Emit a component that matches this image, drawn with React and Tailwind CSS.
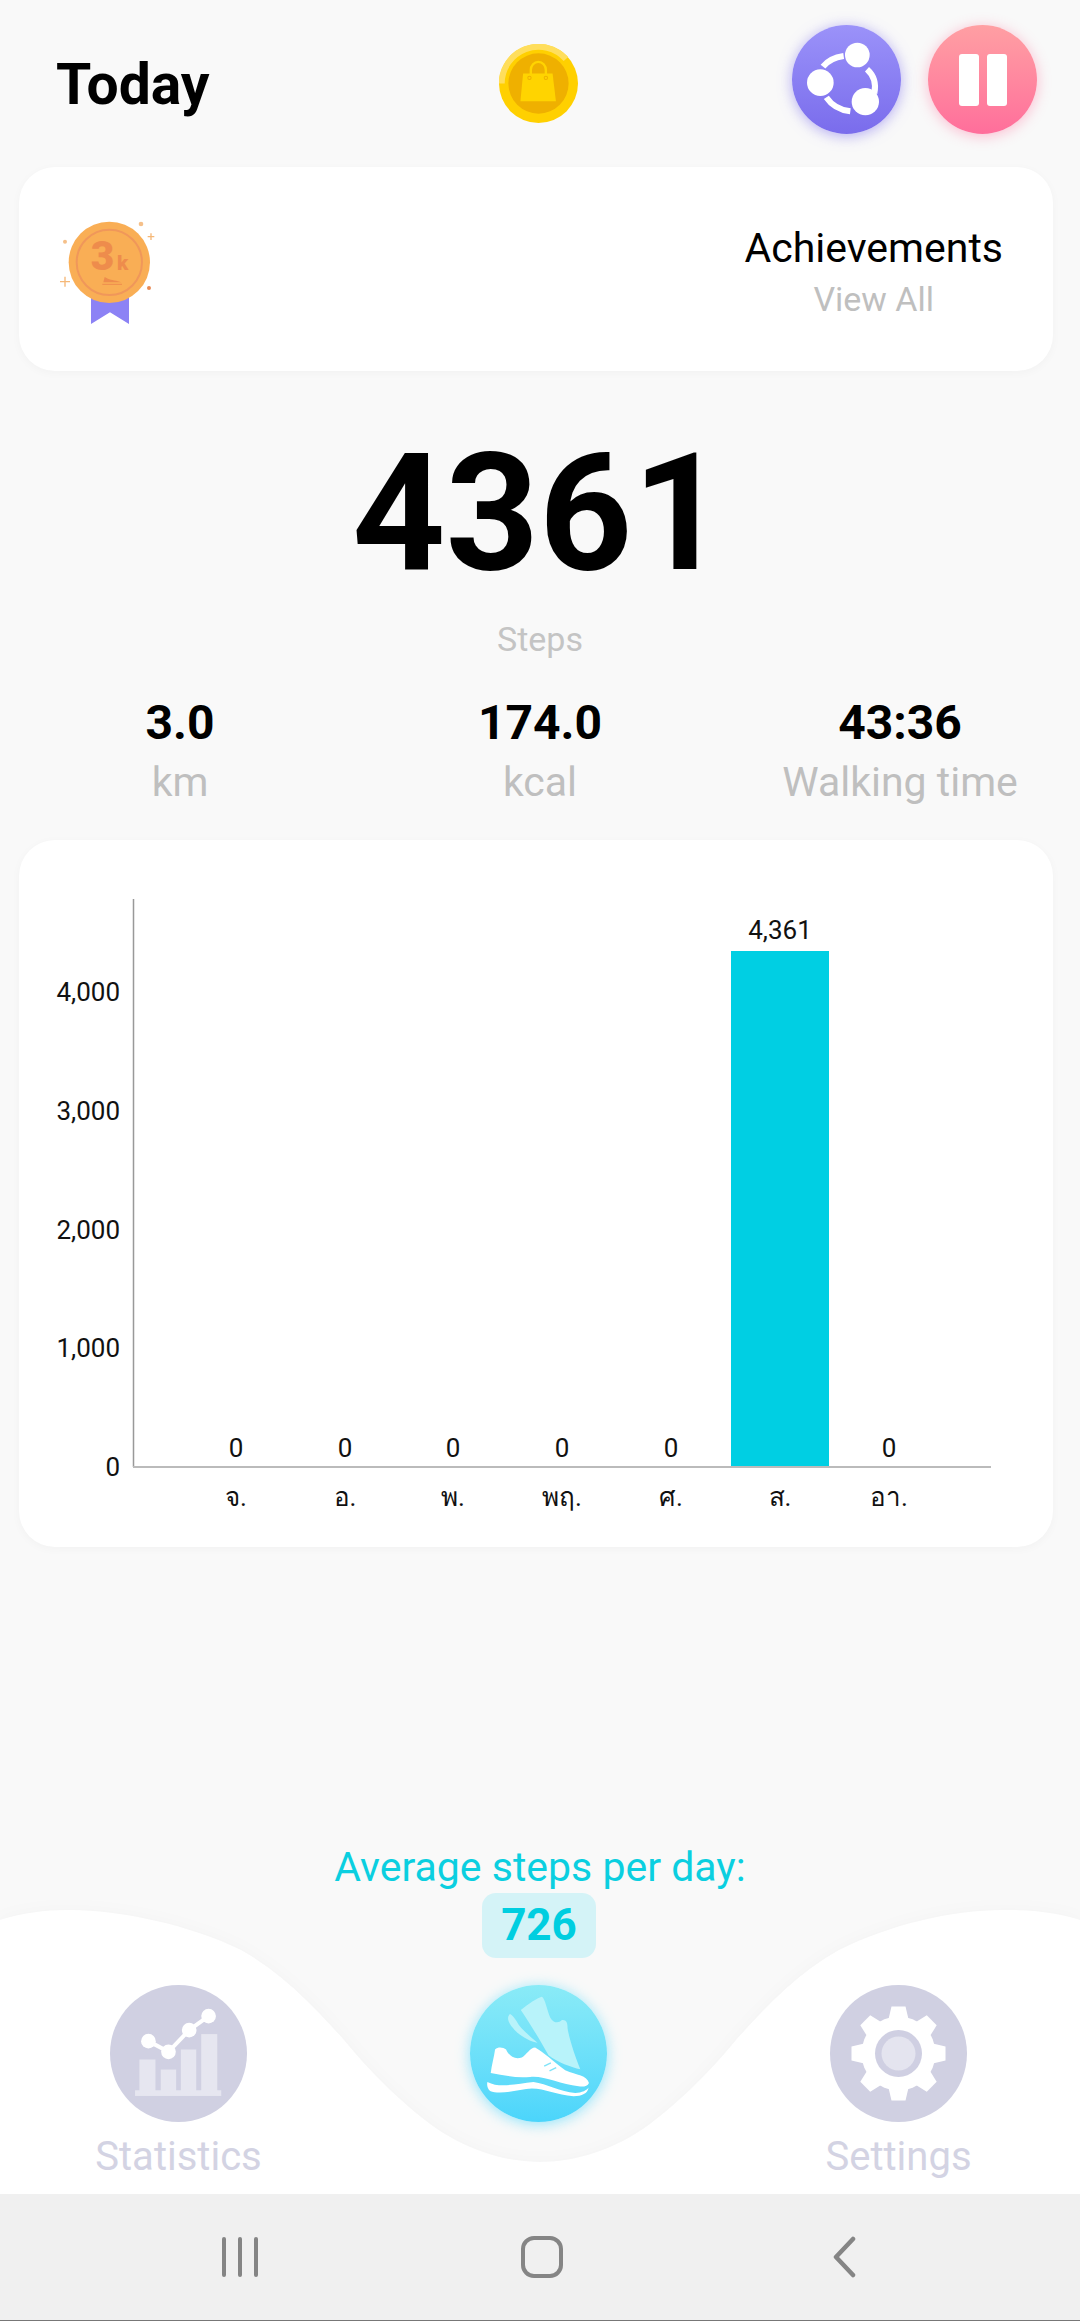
const font = { fontFamily: '"Roboto", "Noto Sans", sans-serif' };

const bars = [
  { day: 'จ.', value: '0', x: 236 },
  { day: 'อ.', value: '0', x: 345 },
  { day: 'พ.', value: '0', x: 453 },
  { day: 'พฤ.', value: '0', x: 562 },
  { day: 'ศ.', value: '0', x: 671 },
  { day: 'ส.', value: '4,361', x: 780 },
  { day: 'อา.', value: '0', x: 889 },
];

const ticks = [
  { label: '4,000', y: 991 },
  { label: '3,000', y: 1110 },
  { label: '2,000', y: 1229 },
  { label: '1,000', y: 1347 },
  { label: '0', y: 1466 },
];

const stats = [
  { value: '3.0', unit: 'km' },
  { value: '174.0', unit: 'kcal' },
  { value: '43:36', unit: 'Walking time' },
];

function Coin() {
  return (
    <svg viewBox="120 67 236 236" className="w-[79px] h-[79px]">
      <circle cx="238" cy="185" r="118" fill="#ffd000" />
      <path d="M128 185 A110 110 0 0 1 320 112" fill="none" stroke="#ffde5c" strokeWidth="18" />
      <circle cx="238" cy="185" r="90" fill="#efb000" />
      <path d="M192 155 H280 L290 238 H184 Z" fill="#ffd400" />
      <path d="M215 158 V145 A22 24 0 0 1 260 145 V158" fill="none" stroke="#ffd400" strokeWidth="7" />
      <circle cx="211" cy="168" r="5" fill="none" stroke="#efb000" strokeWidth="3" />
      <circle cx="260" cy="168" r="5" fill="none" stroke="#efb000" strokeWidth="3" />
    </svg>
  );
}

function ShareIcon() {
  return (
    <svg viewBox="65 45 327 327" className="w-[109px] h-[109px]">
      <g fill="none" stroke="#fff" strokeWidth="18">
        <path d="M158 170 C172 152 192 142 220 138" />
        <path d="M290 178 C310 196 318 222 312 250" />
        <path d="M168 262 C184 286 208 300 240 304" />
      </g>
      <g fill="#fff">
        <circle cx="261" cy="135" r="37" />
        <circle cx="150" cy="218" r="40" />
        <circle cx="285" cy="275" r="41" />
      </g>
    </svg>
  );
}

function Medal() {
  return (
    <svg viewBox="0 0 140 140" className="w-[140px] h-[140px]" style={font}>
      <g transform="scale(0.3333)">
        <path d="M153 295 H267 V375 L210 340 L153 375 Z" fill="#8c82f5" />
        <circle cx="208" cy="190" r="122" fill="#f9ae55" />
        <circle cx="208" cy="190" r="98" fill="none" stroke="#f0975a" strokeWidth="6" />
        <text x="152" y="212" fontSize="122" fontWeight="900" fill="#ee8c4c">3</text>
        <text x="231" y="212" fontSize="62" fontWeight="900" fill="#ee8c4c">k</text>
        <path d="M190 250 L194 234 L204 239 C214 244 232 244 244 250 Z" fill="#ee8c4c" />
        <path d="M187 256 H246" stroke="#ee8c4c" strokeWidth="3" />
        <circle cx="303" cy="75" r="7" fill="#f5c08a" />
        <circle cx="75" cy="128" r="6" fill="#f5c08a" />
        <circle cx="327" cy="267" r="6" fill="#e88a55" />
        <path d="M333 103 V123 M323 113 H343 M75 233 V263 M60 248 H90" stroke="#f5b878" strokeWidth="4" />
      </g>
    </svg>
  );
}

function Gear() {
  const teeth = [0, 45, 90, 135, 180, 225, 270, 315];
  return (
    <svg viewBox="-68.5 -68.5 137 137" className="w-[137px] h-[137px]">
      {teeth.map((a) => (
        <path key={a} d="M-7 -47 H7 L11 -30 H-11 Z" fill="#fff" transform={`rotate(${a})`} />
      ))}
      <circle r="37" fill="#fff" />
      <circle r="23.5" fill="#cfcfe2" />
      <circle r="17" fill="#e4e4ef" />
    </svg>
  );
}

function StatsIcon() {
  return (
    <svg viewBox="60 45 410 410" className="w-[137px] h-[137px]">
      <g fill="#e6e6f0">
        <rect x="148" y="268" width="48" height="95" />
        <rect x="212" y="298" width="46" height="65" />
        <rect x="272" y="238" width="46" height="125" />
        <rect x="333" y="192" width="48" height="171" />
        <rect x="135" y="360" width="258" height="17" />
      </g>
      <path d="M175 213 L235 245 L297 180 L355 138" fill="none" stroke="#fff" strokeWidth="12" />
      <g fill="#fff">
        <circle cx="175" cy="213" r="22" />
        <circle cx="235" cy="245" r="22" />
        <circle cx="297" cy="180" r="22" />
        <circle cx="355" cy="138" r="22" />
      </g>
    </svg>
  );
}

function ShoeIcon() {
  return (
    <svg viewBox="60 75 410 410" className="w-[137px] h-[137px]">
      <path d="M212 150 C235 130 260 115 275 110 C285 115 290 150 300 172 C310 190 325 190 335 180 C350 178 352 190 352 205 C358 240 375 290 390 327 C365 322 320 305 295 285 C275 250 240 190 212 150 Z" fill="#b8f3fa" />
      <path d="M180 162 C195 170 200 190 215 205 C230 220 245 235 262 248 C240 245 205 225 190 205 C175 190 168 170 180 162 Z" fill="#b8f3fa" />
      <path d="M135 268 C145 258 160 262 168 268 C178 290 195 298 215 292 C228 285 240 262 255 262 C280 275 310 305 345 330 C380 345 410 345 416 368 C412 378 400 380 385 378 C330 372 280 345 240 350 C200 355 160 345 122 338 C125 315 132 290 135 268 Z" fill="#fff" />
      <path d="M112 365 C150 385 200 370 250 365 C290 370 330 395 375 398 C395 398 410 390 415 382 C412 400 395 408 370 408 C320 405 285 385 245 385 C205 388 150 405 120 392 C112 385 110 375 112 365 Z" fill="#fff" />
      <path d="M282 318 L302 308 M298 332 L318 322" stroke="#7fe3f8" strokeWidth="4" />
    </svg>
  );
}

function NavItem({ circle, label, children }) {
  return (
    <div className="w-[137px] flex flex-col items-center">
      <div className={`w-[137px] h-[137px] rounded-full ${circle}`}>{children}</div>
      <span className="mt-[13px] h-[44px] leading-[44px] text-[40px] text-[#d3d3e3] whitespace-nowrap">{label}</span>
    </div>
  );
}

export default function App() {
  return (
    <div className="relative w-[1080px] h-[2321px] flex flex-col bg-[#f9f9f9] overflow-hidden" style={font}>
      {/* header */}
      <div className="h-[167px] pl-[56px] pt-[25px] flex items-start">
        <h1 className="w-[284px] h-[109px] leading-[120px] text-[57px] font-bold text-black">Today</h1>
        <div className="w-[452px] pt-[19px] pl-[159px]">
          <Coin />
        </div>
        <div className="flex gap-[27px]">
          <div className="w-[109px] h-[109px] rounded-full bg-gradient-to-b from-[#9b92f9] to-[#7a6cec] shadow-[0_2px_14px_rgba(122,108,236,0.55)]">
            <ShareIcon />
          </div>
          <div className="w-[109px] h-[109px] rounded-full bg-gradient-to-b from-[#ff9fa3] to-[#ff6e9b] shadow-[0_2px_14px_rgba(255,110,155,0.45)] flex items-center justify-center gap-[8px]">
            <span className="w-[20px] h-[52px] rounded-[3px] bg-white" />
            <span className="w-[20px] h-[52px] rounded-[3px] bg-white" />
          </div>
        </div>
      </div>

      {/* achievements */}
      <div className="ml-[19px] w-[1034px] h-[204px] rounded-[36px] bg-white shadow-[0_2px_10px_rgba(0,0,0,0.03)] pl-[21px] pr-[50px] flex items-center justify-between">
        <Medal />
        <div className="flex flex-col items-center pt-[6px]">
          <span className="h-[50px] leading-[50px] text-[41px] text-black">Achievements</span>
          <span className="mt-[3px] h-[46px] leading-[46px] text-[34px] text-[#bfbfbf]">View All</span>
        </div>
      </div>

      {/* today's count */}
      <div className="flex flex-col items-center">
        <span className="mt-[37px] h-[209px] leading-[212px] text-[163px] font-bold text-black -translate-x-[1px]">4361</span>
        <span className="mt-[2px] h-[40px] leading-[40px] text-[34px] text-[#c4c4c4]">Steps</span>
      </div>

      <div className="mt-[36px] grid grid-cols-3 text-center">
        {stats.map((s) => (
          <div key={s.unit} className="flex flex-col items-center">
            <span className="h-[56px] leading-[56px] text-[48px] font-bold text-black">{s.value}</span>
            <span className="mt-[5px] h-[52px] leading-[52px] text-[41px] text-[#bfbfbf] whitespace-nowrap">{s.unit}</span>
          </div>
        ))}
      </div>

      {/* weekly chart */}
      <div className="mt-[32px] ml-[19px] w-[1034px] h-[707px] rounded-[36px] bg-white shadow-[0_2px_10px_rgba(0,0,0,0.03)]">
        <svg viewBox="19 840 1034 707" className="w-[1034px] h-[707px]">
          <g fontSize="26" fill="#111" style={{ fontFamily: '"Roboto", "Noto Sans", sans-serif' }}>
            {ticks.map((t) => (
              <text key={t.label} x="120" y={t.y + 10} textAnchor="end">{t.label}</text>
            ))}
            {bars.map((b) => (
              <text key={b.x} x={b.x} y={b.value === '0' ? 1457 : 939} textAnchor="middle">{b.value}</text>
            ))}
            {bars.map((b) => (
              <text key={b.day} x={b.x} y="1506" textAnchor="middle">{b.day}</text>
            ))}
          </g>
          <rect x="731" y="951" width="98" height="516" fill="#00cfe3" />
          <path d="M133.5 899 V1467" stroke="#999" strokeWidth="1.5" />
          <path d="M133 1467 H991" stroke="#bbb" strokeWidth="2" />
        </svg>
      </div>

      {/* bottom */}
      <div className="relative flex-1 flex flex-col">
        <svg viewBox="0 1547 1080 647" className="absolute left-0 top-0 w-[1080px] h-[647px] drop-shadow-[0_0_8px_rgba(0,0,0,0.025)]">
          <path
            d="M0 1920 C22 1913 45 1910 69 1910 C120 1910 190 1925 241 1950 C280 1972 310 2002 344 2040 C375 2078 405 2105 430 2124 C465 2150 505 2162 540 2162 C575 2162 615 2150 650 2124 C675 2105 705 2078 736 2040 C770 2002 800 1972 839 1950 C890 1925 950 1910 1005 1910 C1035 1910 1058 1913 1080 1920 V2194 H0 Z"
            fill="#fff"
          />
        </svg>
        <div className="relative flex flex-col items-center mt-[296px]">
          <span className="h-[48px] leading-[48px] text-[41px] text-[#0bcfe0]">Average steps per day:</span>
          <span className="mt-[2px] w-[114px] h-[65px] rounded-[14px] bg-[#d4f3f7] leading-[65px] text-center text-[44px] font-bold text-[#00cee0] -translate-x-[1px]">726</span>
        </div>
        <div className="relative mt-[27px] pl-[110px] pr-[113px] flex justify-between items-start">
          <NavItem circle="bg-[#d0d0e2]" label="Statistics">
            <StatsIcon />
          </NavItem>
          <NavItem circle="bg-gradient-to-b from-[#8aebf7] to-[#4bd5fb] shadow-[0_2px_14px_rgba(75,213,251,0.6)]" label="">
            <ShoeIcon />
          </NavItem>
          <NavItem circle="bg-[#d0d0e2]" label="Settings">
            <Gear />
          </NavItem>
        </div>
      </div>

      {/* android nav bar */}
      <div className="relative h-[127px] bg-[#f0f0f0] border-b-[1px] border-[#777] flex items-center pl-[222px] pb-[1px]">
        <div className="flex gap-[12px] h-[40px]">
          <span className="w-[4px] rounded-full bg-[#858585]" />
          <span className="w-[4px] rounded-full bg-[#858585]" />
          <span className="w-[4px] rounded-full bg-[#858585]" />
        </div>
        <div className="ml-[263px] w-[42px] h-[42px] rounded-[13px] border-[4px] border-[#858585]" />
        <svg viewBox="0 0 24 42" className="ml-[269px] w-[24px] h-[42px]">
          <path d="M21 3 L4 21 L21 39" fill="none" stroke="#858585" strokeWidth="4.5" strokeLinecap="round" strokeLinejoin="round" />
        </svg>
      </div>
    </div>
  );
}
